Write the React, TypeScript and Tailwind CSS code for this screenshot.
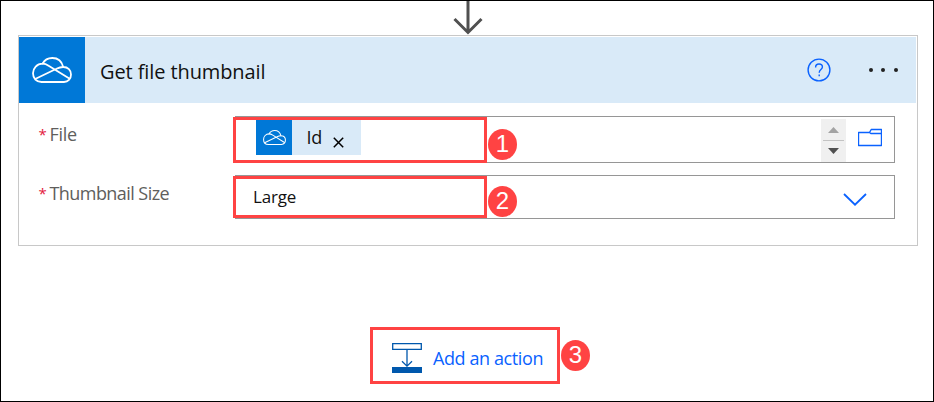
import type { ReactNode } from "react";

function CloudIcon({ className, stroke }: { className: string; stroke: number }) {
  return (
    <svg viewBox="0 0 40 26" className={className} fill="none" stroke="white" strokeWidth={stroke} strokeLinecap="round" strokeLinejoin="round">
      <path d="M9.5 25C4.5 25 1 21.5 1 16.3C1 11 5 6.7 10.5 6.7C12.5 3 16 1 20.3 1C25.5 1 29.8 4.3 31.2 10C36 10 39 13.3 39 17.5C39 22 36 25 32 25Z" />
      <path d="M10.5 6.7C13.2 6.7 14.6 7.4 17 8.9L37.3 21.6M31.2 10C28.5 10 27 10.5 24.5 11.8L3.7 21.8" />
    </svg>
  );
}

function Callout({ children, className }: { children: ReactNode; className: string }) {
  return (
    <div className={`absolute flex h-[31.5px] w-[29.5px] items-center justify-center rounded-[50%] bg-[#ff4343] font-['Liberation_Sans',Arial,sans-serif] text-[24px] font-normal leading-none text-white ${className}`}>
      {children}
    </div>
  );
}

function Label({ text, spacing }: { text: string; spacing: string }) {
  return (
    <div className="flex w-[216px] shrink-0 pl-[19.5px] text-[18px] leading-6 text-[#605e5c]">
      <span className="w-[11px] text-[15px] text-[#e3193d]">*</span>
      <span className={`whitespace-nowrap ${spacing}`}>{text}</span>
    </div>
  );
}

export default function App() {
  return (
    <main className="relative flex h-[402px] w-[934px] flex-col overflow-hidden border border-black bg-white font-['Open_Sans','Noto_Sans',sans-serif]">
      <div className="h-[34px] shrink-0 pl-[452px]">
        <svg className="block h-[34px] w-[30px]" viewBox="0 0 30 34" fill="none" stroke="#505050" strokeWidth="3">
          <path d="M15 0V32M1.5 18L15 31.5L28.5 18" />
        </svg>
      </div>

      <section className="ml-[17px] h-[211px] w-[900px] shrink-0 border border-[#c8c8c8] pt-px">
        <header className="mr-px flex h-[66px] items-center bg-[#d9eaf8]">
          <div className="flex size-[66px] items-center justify-center bg-[#0078d7]">
            <CloudIcon className="h-[26px] w-10" stroke={1.8} />
          </div>
          <h1 className="ml-[15px] mt-1 flex-1 whitespace-nowrap text-[20px] leading-none tracking-[-0.1px] text-[#111]">Get file thumbnail</h1>
          <svg className="mb-px mr-[37.5px] size-6" viewBox="0 0 24 24" fill="none" stroke="#0a62ff" strokeWidth="1.4">
            <circle cx="12" cy="12" r="10.9" />
            <path d="M8.6 9.4C8.6 7.2 9.9 6 12 6C14 6 15.4 7.2 15.4 9C15.4 11.6 12.2 11.6 12.2 14.7" />
            <path d="M12.2 16.6V18.3" />
          </svg>
          <div className="mb-px mr-[18.5px] flex gap-[8.4px]">
            <i className="size-1 rounded-full bg-[#222]" />
            <i className="size-1 rounded-full bg-[#222]" />
            <i className="size-1 rounded-full bg-[#222]" />
          </div>
        </header>

        <div className="mt-[13px] flex h-[47px]">
          <div className="pt-[6px]"><Label text="File" spacing="tracking-[-0.3px]" /></div>
          <div className="relative flex w-[660px] border border-[#969696]">
            <div className="ml-[20px] mt-[3px] flex h-[35px] w-[105px] items-center bg-[#d9eaf8]">
              <div className="flex h-full w-9 items-center justify-center bg-[#0078d7]">
                <CloudIcon className="h-[15px] w-[23px]" stroke={1.8} />
              </div>
              <span className="ml-[14.5px] text-[18px] tracking-[-0.2px] text-[#111]">Id</span>
              <svg className="ml-[10.5px] mt-[10px] size-[11px]" viewBox="0 0 11 11" stroke="black" strokeWidth="1.5">
                <path d="M.8 .8L10.2 10.2M10.2 .8L.8 10.2" />
              </svg>
            </div>
            <div className="ml-auto mr-[12px] mt-[2px] flex h-[43px] w-[25px] flex-col items-center bg-[#f0f0f0]">
              <svg className="mt-2 h-[6px] w-[11px]" viewBox="0 0 11 6"><path d="M0 6L5.5 0L11 6Z" fill="#a3a3a3" /></svg>
              <hr className="mt-[7px] w-[21px] border-0 border-t border-[#c3c3c3]" />
              <svg className="mt-[7px] h-[6px] w-[11px]" viewBox="0 0 11 6"><path d="M0 0L5.5 6L11 0Z" fill="#505050" /></svg>
            </div>
            <svg className="mr-[12px] mt-[11px] h-[19px] w-6" viewBox="0 0 24 19" fill="none" stroke="#0a62ff" strokeWidth="1.4" strokeLinejoin="round">
              <path d="M.5 4.5H11.5L13.2 1.5H23.5V17.5H.5ZM11.5 4.5L12.8 5.5H23.5" />
            </svg>
            <div className="absolute -left-[3px] top-0 h-[46px] w-[254px] border-[3px] border-[#ff4343]" />
            <Callout className="left-[251.8px] top-[11.7px]">1</Callout>
          </div>
        </div>

        <div className="mt-3 flex h-[44px]">
          <div className="pt-[6px]"><Label text="Thumbnail Size" spacing="tracking-[-0.56px]" /></div>
          <div className="relative flex w-[660px] items-center justify-between border border-[#969696] pl-[17px] pr-[27px]">
            <span className="text-[17px] tracking-[-0.2px] text-[#111]">Large</span>
            <svg className="mt-1 h-[13px] w-[24px]" viewBox="0 0 24 13" fill="none" stroke="#0a62ff" strokeWidth="1.8">
              <path d="M1 1L12 11.7L23 1" />
            </svg>
            <div className="absolute -left-[3px] top-0 h-[42px] w-[254px] border-[3px] border-[#ff4343]" />
            <Callout className="left-[251.8px] top-[9.7px]">2</Callout>
          </div>
        </div>
      </section>

      <button className="relative ml-[369px] mt-[81px] flex h-[57px] w-[190px] shrink-0 border-[3px] border-[#ff4343] text-[#0a62ff]">
        <svg className="ml-[19px] mt-[13px] h-[30px] w-[30px]" viewBox="0 0 30 30" fill="none" stroke="#0058ad" strokeWidth="1.3">
          <path d="M.7 .7H29.3V6.3H.7ZM15 6.5V23M10 18.2L15 23.1L20 18.2" />
          <path d="M0 24H30V30H0Z" fill="#0058ad" stroke="none" />
        </svg>
        <span className="ml-[11px] mt-[16px] whitespace-nowrap text-[18px] leading-6 tracking-[-0.4px]">Add an action</span>
        <Callout className="left-[187.8px] top-[9.7px]">3</Callout>
      </button>
    </main>
  );
}
